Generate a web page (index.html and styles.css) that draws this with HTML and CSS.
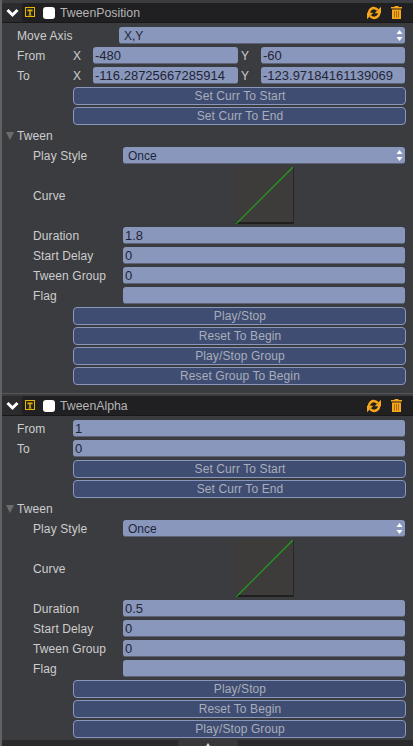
FILE: index.html
```html
<!DOCTYPE html>
<html lang="en">
<head>
<meta charset="utf-8">
<title>Inspector</title>
<link rel="stylesheet" href="styles.css">
</head>
<body>
<svg width="0" height="0" class="defs">
  <symbol id="chev" viewBox="0 0 13 10"><path d="M1.500 2 L6.500 7 L11.500 2" fill="none" stroke="#fff" stroke-width="3"/></symbol>
  <symbol id="ticon" viewBox="0 0 11 11"><rect x=".5" y=".5" width="9" height="9" fill="#222" stroke="#e8b400"/><path d="M2.500 2.500h5v2h-1v-.8H5.700v4h.8v.8h-3v-.8h.8v-4H3.500v.8h-1z" fill="#f0c000"/></symbol>
  <symbol id="refresh" viewBox="0 0 14 14"><path d="M1.800 7C2 3.800 4.800 1.600 7.800 2.200c1.300.2 2.200.9 3 1.800" fill="none" stroke="#f9a61a" stroke-width="2.500"/><path d="M14 .8v6.400H7.600z" fill="#f9a61a"/><path d="M12.200 7c-.2 3.200-3 5.400-6 4.800-1.300-.2-2.200-.9-3-1.800" fill="none" stroke="#f9a61a" stroke-width="2.500"/><path d="M0 13.200V6.800h6.400z" fill="#f9a61a"/></symbol>
  <symbol id="trash" viewBox="0 0 11 13"><path d="M3.500 0h4v1H11v1.500H0V1h3.500z" fill="#f9a61a"/><path d="M1 3.500h9V13H1z" fill="#f9a61a"/><path d="M3 5h1v6.500H3zM5 5h1v6.500H5zM7 5h1v6.500H7z" fill="#a86d10"/></symbol>
  <symbol id="updown" viewBox="0 0 7 11"><path d="M3.500 0L6.500 4h-6zM3.500 11L.5 7h6z" fill="#fff"/></symbol>
</svg>

<section class="panel">
  <header class="head">
    <svg class="chev"><use href="#chev"/></svg>
    <div class="bar">
      <svg class="ticon"><use href="#ticon"/></svg>
      <span class="check"></span>
      <span class="title">TweenPosition</span>
      <svg class="refresh"><use href="#refresh"/></svg>
      <svg class="trash"><use href="#trash"/></svg>
    </div>
  </header>
  <div class="body">
    <div class="row"><label class="lab-a">Move Axis</label><div class="select sel-a">X,Y<svg class="updown"><use href="#updown"/></svg></div></div>
    <div class="row"><label class="lab-b">From</label><span class="axis">X</span><div class="field f-x">-480</div><span class="axis ay">Y</span><div class="field f-y">-60</div></div>
    <div class="row"><label class="lab-b">To</label><span class="axis">X</span><div class="field f-x">-116.28725667285914</div><span class="axis ay">Y</span><div class="field f-y">-123.97184161139069</div></div>
    <button class="btn">Set Curr To Start</button>
    <button class="btn">Set Curr To End</button>
    <div class="fold"><i class="tri"></i>Tween</div>
    <div class="row"><label class="lab-c">Play Style</label><div class="select sel-c">Once<svg class="updown"><use href="#updown"/></svg></div></div>
    <div class="row curve-row"><label class="lab-c">Curve</label><svg class="curve" viewBox="0 0 58 58" preserveAspectRatio="none"><rect width="58" height="58" fill="#3d3c3a"/><rect y="56" width="58" height="2" fill="#1e1e1e"/><rect x="57" width="1" height="58" fill="#272727"/><path d="M0 58L57 0" stroke="#20a820" stroke-width="1.200"/></svg></div>
    <div class="row"><label class="lab-c">Duration</label><div class="field f-c">1.8</div></div>
    <div class="row"><label class="lab-c">Start Delay</label><div class="field f-c">0</div></div>
    <div class="row"><label class="lab-c">Tween Group</label><div class="field f-c">0</div></div>
    <div class="row"><label class="lab-c">Flag</label><div class="field f-c"></div></div>
    <button class="btn">Play/Stop</button>
    <button class="btn">Reset To Begin</button>
    <button class="btn">Play/Stop Group</button>
    <button class="btn">Reset Group To Begin</button>
  </div>
</section>

<section class="panel">
  <header class="head">
    <svg class="chev"><use href="#chev"/></svg>
    <div class="bar">
      <svg class="ticon"><use href="#ticon"/></svg>
      <span class="check"></span>
      <span class="title">TweenAlpha</span>
      <svg class="refresh"><use href="#refresh"/></svg>
      <svg class="trash"><use href="#trash"/></svg>
    </div>
  </header>
  <div class="body">
    <div class="row"><label class="lab-b">From</label><div class="field f-w">1</div></div>
    <div class="row"><label class="lab-b">To</label><div class="field f-w">0</div></div>
    <button class="btn">Set Curr To Start</button>
    <button class="btn">Set Curr To End</button>
    <div class="fold"><i class="tri"></i>Tween</div>
    <div class="row"><label class="lab-c">Play Style</label><div class="select sel-c">Once<svg class="updown"><use href="#updown"/></svg></div></div>
    <div class="row curve-row"><label class="lab-c">Curve</label><svg class="curve" viewBox="0 0 58 58" preserveAspectRatio="none"><rect width="58" height="58" fill="#3d3c3a"/><rect y="56" width="58" height="2" fill="#1e1e1e"/><rect x="57" width="1" height="58" fill="#272727"/><path d="M0 58L57 0" stroke="#20a820" stroke-width="1.200"/></svg></div>
    <div class="row"><label class="lab-c">Duration</label><div class="field f-c">0.5</div></div>
    <div class="row"><label class="lab-c">Start Delay</label><div class="field f-c">0</div></div>
    <div class="row"><label class="lab-c">Tween Group</label><div class="field f-c">0</div></div>
    <div class="row"><label class="lab-c">Flag</label><div class="field f-c"></div></div>
    <button class="btn">Play/Stop</button>
    <button class="btn">Reset To Begin</button>
    <button class="btn">Play/Stop Group</button>
  </div>
</section>

<footer class="foot"><span class="tab"><i class="caret"></i></span></footer>
</body>
</html>
```

FILE: styles.css
```css
* { box-sizing: border-box; }
html, body { margin: 0; height: 100%; overflow: hidden; }
body {
  width: 413px; height: 746px; position: relative;
  background: #3b3c40;
  font-family: "Liberation Sans", Arial, sans-serif;
  font-size: 12px; color: #cdcdcd;
  border-left: 2px solid #626262;
}
.defs { position: absolute; }
.panel { height: 393px; padding-top: 3px; }
.panel + .panel { border-top: 1px solid #55565a; height: 353px; padding-top: 2px; }
.head {
  height: 20px; display: flex; align-items: center;
  background: #2b2b2d; border-bottom: 1px solid #18181a;
  margin-bottom: 4px;
}
.chev { width: 13px; height: 10px; margin-left: 4px; flex: none; }
.bar {
  flex: 1; height: 19px; margin-left: 3px; background: #202023;
  border-radius: 3px 0 0 3px; display: flex; align-items: center;
}
.ticon { width: 11px; height: 11px; margin-left: 3px; flex: none; }
.check { width: 12px; height: 12px; background: #fff; border-radius: 3px; margin-left: 7px; flex: none; }
.title { margin-left: 5px; color: #b4b4b4; font-size: 12.300px; flex: 1; }
.refresh { width: 14px; height: 14px; flex: none; margin-right: 10px; }
.trash { width: 11px; height: 13px; flex: none; margin-right: 11px; }

.body { display: flex; flex-direction: column; gap: 3px; width: 404px; }
.row { display: flex; align-items: center; height: 17px; flex: none; }
.curve-row { height: 57px; }
label { display: block; letter-spacing: .1px; }
.lab-a, .lab-b { margin-left: 15px; }
.lab-a { width: 102px; }
.lab-b { width: 56px; }
.lab-c { margin-left: 31px; width: 90px; }
.axis { width: 20px; }
.ay { width: 20px; margin-left: 3px; }
.field, .select {
  height: 17px; line-height: 18px; background: #8a97bd; color: #1f2535;
  border-radius: 3px; border-bottom: 1px solid #5d6478; white-space: nowrap; overflow: hidden;
}
.field { padding-left: 2px; font-size: 13px; }
.select { padding-left: 5px; position: relative; color: #20263a; }
.f-x { width: 145px; }
.f-y { width: 144px; }
.f-c { width: 282px; }
.f-w { width: 332px; }
.sel-a { width: 286px; }
.sel-c { width: 282px; }
.updown { width: 7px; height: 11px; position: absolute; right: 2px; top: 3px; }
.btn {
  display: block; flex: none; width: 333px; height: 18px; margin: 0 0 -1px 71px; padding: 0 0 0 1px;
  background: #3f4d72; color: #a9aeba; border: 1px solid #8a97bd; border-radius: 4px;
  font: inherit; font-size: 12px; line-height: 15px; letter-spacing: .1px;
}
.fold { height: 17px; line-height: 15px; padding-top: 1px; margin-left: 4px; display: flex; align-items: center; color: #cdcdcd; letter-spacing: .1px; }
.tri { width: 0; height: 0; border-left: 4.500px solid transparent; border-right: 4.500px solid transparent; border-top: 8px solid #6c6c6c; margin-right: 3px; }
.curve { width: 58px; height: 57px; margin-left: 113px; }
.foot {
  position: absolute; left: -2px; right: 0; bottom: 0; height: 6px; background: #2a2a2c;
}
.tab { position: absolute; left: 178px; top: 0; width: 60px; height: 6px; background: #38383b; border-radius: 2px 2px 0 0; }
.caret { position: absolute; left: 28px; top: 3px; border-left: 2px solid transparent; border-right: 2px solid transparent; border-bottom: 3px solid #ddd; }
```
